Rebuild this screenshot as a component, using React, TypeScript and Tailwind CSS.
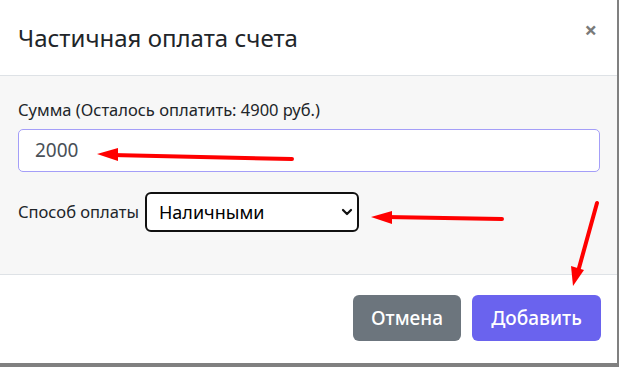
import React from "react";

export default function App() {
  return (
    <div
      className="relative w-[619px] h-[367px] overflow-hidden bg-[#808080]"
      style={{ fontFamily: '"Noto Sans", "Open Sans", sans-serif' }}
    >
      <div className="w-[617px] h-[363px] bg-white flex flex-col">
        <div className="h-[76px] flex items-start justify-between border-b border-[#dee2e6] pl-[18px] pr-[20px]">
          <div className="mt-[22px] text-[24px] leading-[32px] text-[#212529]">Частичная оплата счета</div>
          <div className="mt-[17px] text-[22px] font-bold leading-[24px] text-[#7a7a7a]">×</div>
        </div>
        <div className="h-[199px] bg-[#f7f7f7] border-b border-[#dee2e6] pl-[18px] pr-[17px] pt-[23px] flex flex-col">
          <div className="text-[16.5px] leading-[22px] text-[#212529]">Сумма (Осталось оплатить: 4900 руб.)</div>
          <div className="mt-[8px] h-[43px] w-[582px] rounded-[5px] border border-[#a49ef8] bg-white flex items-center pl-[16px] text-[19px] text-[#495057]">
            2000
          </div>
          <div className="mt-[20px] flex items-center">
            <div className="text-[16.5px] text-[#212529] mr-[6px]">Способ оплаты</div>
            <div className="h-[40px] w-[214px] rounded-[6px] border-2 border-[#111] bg-white flex items-center justify-between pl-[12px] pr-[4px] text-[18px] text-black">
              <span>Наличными</span>
              <svg width="12" height="8" viewBox="0 0 12 8">
                <path d="M2 2 L6 6 L10 2" fill="none" stroke="#111" strokeWidth="2.2" strokeLinecap="round" strokeLinejoin="round" />
              </svg>
            </div>
          </div>
        </div>
        <div className="flex-1 flex items-start justify-end pr-[16px] pt-[20px] gap-[11px]">
          <button className="h-[46px] w-[108px] rounded-[6px] bg-[#6c757d] text-white text-[19px] font-medium">Отмена</button>
          <button className="h-[46px] w-[129px] rounded-[6px] bg-[#6a63ee] text-white text-[19px] font-medium">Добавить</button>
        </div>
      </div>
      <svg className="absolute inset-0 pointer-events-none" width="619" height="367" viewBox="0 0 619 367">
        <line x1="292" y1="159" x2="112" y2="155" stroke="#ff0000" strokeWidth="4" strokeLinecap="round" />
        <polygon points="97,154 118,148 118,161" fill="#ff0000" />
        <line x1="502" y1="219" x2="386" y2="217" stroke="#ff0000" strokeWidth="4" strokeLinecap="round" />
        <polygon points="371,217 392,211 392,224" fill="#ff0000" />
        <line x1="597" y1="203" x2="579" y2="268" stroke="#ff0000" strokeWidth="4" strokeLinecap="round" />
        <polygon points="573,286 584,270 571,266" fill="#ff0000" />
      </svg>
    </div>
  );
}
